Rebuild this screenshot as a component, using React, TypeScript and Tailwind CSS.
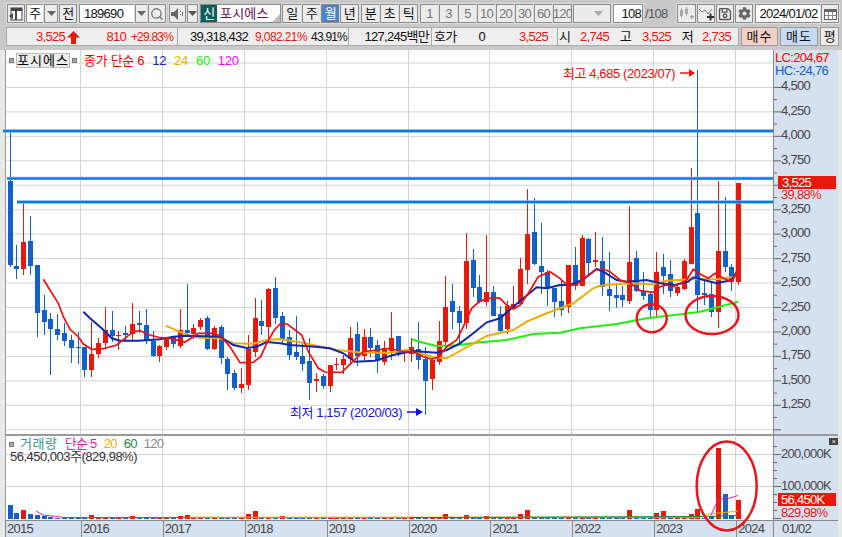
import type { ReactNode } from "react"
import { FaCog, FaRegSave } from "react-icons/fa"
import { Search } from "lucide-react"

// [up, high, low, bodyTop, bodyBottom] measured in 3x crop units (y = 170 + v / 3)
const candles: [number, number, number, number, number][] = [
  [0, -120, 290, 33, 285], [0, 225, 326, 288, 297], [1, 100, 315, 216, 297], [0, 138, 315, 213, 288],
  [0, 285, 500, 285, 429], [0, 375, 495, 420, 456], [0, 430, 615, 447, 477], [0, 432, 510, 477, 495],
  [0, 459, 528, 489, 513], [0, 495, 579, 510, 534], [0, 487, 582, 531, 534], [0, 530, 621, 531, 600],
  [1, 456, 621, 552, 600], [1, 504, 564, 519, 552], [1, 411, 534, 480, 519], [0, 423, 516, 480, 498],
  [1, 483, 540, 495, 498], [0, 468, 516, 489, 494], [1, 399, 516, 462, 492], [0, 423, 489, 459, 465],
  [0, 417, 522, 465, 513], [0, 483, 561, 513, 558], [1, 525, 576, 528, 558], [1, 501, 540, 501, 531],
  [0, 498, 534, 501, 522], [1, 417, 534, 480, 528], [0, 342, 498, 480, 489], [1, 462, 507, 474, 492],
  [1, 444, 480, 450, 471], [0, 438, 540, 444, 537], [1, 468, 540, 474, 537], [0, 465, 582, 471, 564],
  [0, 561, 660, 567, 612], [0, 600, 660, 609, 654], [1, 594, 669, 642, 654], [1, 495, 660, 537, 645],
  [1, 384, 561, 444, 546], [0, 390, 495, 453, 468], [1, 354, 510, 357, 471], [0, 321, 462, 354, 444],
  [0, 426, 520, 438, 507], [0, 480, 570, 501, 555], [0, 438, 570, 546, 561], [0, 522, 603, 558, 582],
  [0, 504, 690, 573, 639], [1, 609, 666, 628, 632], [0, 612, 657, 618, 648], [1, 585, 666, 585, 648],
  [1, 564, 600, 582, 586], [1, 555, 612, 567, 585], [1, 471, 585, 504, 567], [0, 456, 588, 492, 558],
  [1, 477, 570, 501, 558], [0, 474, 561, 501, 534], [0, 510, 609, 525, 573], [1, 513, 585, 534, 576],
  [1, 426, 570, 504, 543], [0, 498, 558, 498, 552], [1, 537, 576, 541, 545], [1, 504, 576, 531, 552],
  [0, 456, 597, 537, 570], [0, 531, 735, 567, 633], [1, 561, 660, 570, 627], [1, 453, 585, 513, 576],
  [1, 318, 528, 411, 516], [0, 342, 477, 393, 426], [0, 408, 525, 423, 459], [1, 189, 477, 273, 459],
  [0, 237, 381, 270, 354], [0, 315, 399, 351, 396], [1, 195, 408, 366, 396], [0, 348, 438, 366, 438],
  [0, 408, 489, 432, 483], [1, 393, 492, 408, 477], [1, 348, 420, 402, 417], [1, 264, 408, 297, 402],
  [1, 57, 342, 192, 300], [0, 84, 285, 186, 282], [0, 159, 372, 288, 306], [0, 300, 408, 306, 357],
  [0, 354, 441, 354, 396], [0, 330, 438, 393, 420], [1, 285, 429, 285, 411], [0, 231, 360, 285, 348],
  [1, 195, 348, 204, 348], [0, 204, 312, 207, 279], [1, 186, 290, 270, 275], [0, 201, 378, 273, 351],
  [0, 246, 423, 357, 378], [0, 345, 414, 375, 384], [0, 348, 411, 375, 390], [1, 108, 402, 276, 393],
  [0, 243, 366, 264, 363], [0, 306, 390, 363, 378], [0, 366, 444, 372, 420], [1, 246, 444, 306, 420],
  [0, 252, 372, 291, 318], [0, 270, 381, 312, 363], [1, 339, 378, 351, 369], [1, 267, 360, 273, 357],
  [1, -6, 282, 171, 282], [0, -300, 429, 129, 375], [0, 330, 405, 369, 375], [0, 339, 441, 372, 426],
  [1, 33, 474, 243, 426], [0, 81, 306, 243, 291], [0, 282, 363, 291, 336], [1, 39, 345, 39, 336],
]

const candleX = (i: number) => Math.round(9.5 + i * 6.81)
const priceY = (p: number) => 405.3 - ((p - 1250) / 250) * 24.45

// moving averages, same crop units; each crop has its own x offset
const line = (parts: [number, number[]][]) =>
  parts
    .flatMap(([off, pts]) => {
      const out: string[] = []
      for (let i = 0; i < pts.length; i += 2) {
        out.push(`${((pts[i] + off) / 3).toFixed(1)},${(170 + pts[i + 1] / 3).toFixed(1)}`)
      }
      return out
    })
    .join(" ")

const ma6 = line([
  [0, [130, 328, 150, 360, 175, 400, 190, 440, 210, 478, 235, 500, 250, 522, 275, 538, 310, 536, 350, 525, 375, 505, 400, 485, 420, 482, 450, 495, 480, 503, 510, 505, 555, 516, 575, 503, 595, 490, 640, 490, 660, 497, 690, 530, 720, 578, 760, 577, 782, 560, 800, 520, 823, 480]],
  [840, [0, 462, 22, 462, 65, 495, 85, 545, 115, 595, 135, 606, 185, 607, 215, 578, 250, 545, 290, 540, 330, 535, 370, 545, 400, 545, 430, 560, 455, 567, 475, 562, 500, 530, 530, 510, 550, 470, 575, 415, 600, 393, 640, 382, 660, 385, 680, 405, 700, 417, 720, 405, 745, 370, 775, 320, 810, 305]],
  [1680, [0, 325, 20, 345, 50, 345, 80, 320, 105, 300, 130, 297, 150, 305, 180, 330, 210, 338, 240, 362, 280, 367, 300, 350, 320, 345, 340, 350, 380, 330, 400, 298, 420, 312, 445, 325, 465, 310, 490, 325, 515, 335, 535, 300]],
])
const ma12 = line([
  [0, [250, 425, 270, 445, 305, 475, 335, 505, 360, 512, 415, 512, 480, 508, 520, 500, 560, 497, 660, 500, 700, 525, 740, 534, 770, 530, 800, 516]],
  [840, [0, 520, 30, 525, 105, 530, 150, 535, 190, 550, 225, 575, 285, 572, 340, 555, 400, 543, 470, 548, 500, 540, 540, 520, 580, 490, 620, 457, 660, 445, 700, 410, 730, 385, 770, 352, 800, 355]],
  [1680, [0, 345, 30, 345, 70, 328, 110, 297, 130, 305, 170, 330, 200, 335, 260, 330, 300, 340, 345, 345, 385, 335, 400, 322, 440, 332, 470, 340, 515, 330, 530, 305]],
])
const ma24 = line([
  [0, [497, 467, 530, 482, 570, 497, 600, 503, 660, 505, 700, 520, 760, 521, 800, 510]],
  [840, [0, 507, 50, 515, 100, 525, 170, 540, 250, 548, 330, 548, 380, 540, 420, 550, 460, 562, 500, 565, 545, 540, 590, 515, 620, 498, 700, 480, 740, 455, 800, 430]],
  [1680, [0, 415, 40, 400, 100, 355, 120, 347, 200, 340, 280, 343, 320, 332, 400, 328, 470, 328, 525, 320]],
])
const ma60 = line([
  [840, [395, 508, 430, 518, 470, 528, 530, 526, 600, 517, 680, 510, 760, 492]],
  [1680, [0, 488, 60, 475, 170, 462, 260, 445, 370, 432, 420, 425, 535, 395]],
])

const yearX = [80.5, 162.5, 244.5, 326.5, 408.5, 489.5, 571.5, 653.5, 735.5]
const years = ["2016", "2017", "2018", "2019", "2020", "2021", "2022", "2023"]
const priceLabels = [4500, 4250, 4000, 3750, 3500, 3250, 3000, 2750, 2500, 2250, 2000, 1750, 1500, 1250]

// volume bars whose height is more than the flat line at the bottom: index -> [height, red]
const bigVolume: Record<number, [number, number]> = {
  0: [14, 0], 1: [6, 0], 2: [9, 1], 3: [5, 0], 4: [4, 0], 5: [3, 0], 6: [2, 0], 12: [4, 1], 18: [3, 1],
  25: [3, 1], 26: [4, 1], 35: [5, 1], 36: [8, 1], 37: [2, 0], 40: [3, 1], 64: [5, 1], 67: [4, 1], 70: [3, 1],
  75: [5, 1], 76: [9, 1], 91: [9, 1], 95: [6, 1], 96: [8, 1], 100: [5, 1], 101: [10, 1], 103: [3, 0],
  104: [71, 1], 105: [25, 0], 106: [4, 0], 107: [19, 1],
}

const RED = "#e8190b"
const BLUE = "#1260cc"

function Btn({ className = "", children }: { className?: string; children?: ReactNode }) {
  return (
    <div className={`h-[19px] flex items-center justify-center bg-[#ececec] border border-[#8c8c8c] outline outline-1 outline-[#dcdcdc] ${className}`}>
      {children}
    </div>
  )
}

function Caret({ color = "#666" }: { color?: string }) {
  return (
    <svg width="9" height="5" viewBox="0 0 9 5">
      <polygon points="0,0 9,0 4.5,5" fill={color} />
    </svg>
  )
}

function Toolbar() {
  return (
    <div className="h-[27px] pl-[7px] pt-[4px] flex items-start text-[#111]">
      <Btn className="w-[18px]">
        <svg width="14" height="14" viewBox="0 0 14 14">
          <rect x="2" y="1" width="11" height="12" fill="#fff" stroke="#444" />
          <rect x="2" y="1" width="11" height="3" fill="#444" />
          <rect x="6" y="4" width="2" height="9" fill="#444" />
          <polygon points="0,9 4,6 4,12" fill="#444" />
        </svg>
      </Btn>
      <Btn className="w-[18px] ml-[1px] !bg-white">주</Btn>
      <Btn className="w-[14px]"><Caret /></Btn>
      <Btn className="w-[18px] ml-[1px]">전</Btn>
      <Btn className="w-[56px] ml-[2px] !bg-white !justify-start pl-[4px]">189690</Btn>
      <Btn className="w-[13px]"><Caret /></Btn>
      <Btn className="w-[18px]"><Search size={14} strokeWidth={2.2} color="#777" /></Btn>
      <Btn className="w-[17px] ml-[3px]">
        <svg width="14" height="12" viewBox="0 0 14 12">
          <polygon points="0,4 3,4 7,0 7,12 3,8 0,8" fill="#666" />
          <rect x="9" y="3" width="1" height="1" fill="#666" />
          <rect x="9" y="6" width="1" height="1" fill="#666" />
          <rect x="11" y="4" width="1" height="4" fill="#666" />
        </svg>
      </Btn>
      <Btn className="w-[11px] ml-[1px]"><Caret color="#555" /></Btn>
      <div className="relative h-[19px] w-[81px] ml-[2px] flex bg-white border border-[#8c8c8c]">
        <div className="w-[16px] bg-[#0b5f5b] text-white flex items-center justify-center">신</div>
        <div className="pl-[3px] text-[#6a0a4c] leading-[17px] tracking-[0.2px]">포시에스</div>
        <svg className="absolute right-0 bottom-0" width="8" height="8" viewBox="0 0 8 8">
          <polygon points="8,0 8,8 0,8" fill="#bbb" />
        </svg>
      </div>
      <div className="flex ml-[1px]">
        <Btn className="w-[20px]">일</Btn>
        <Btn className="w-[19px]">주</Btn>
        <Btn className="w-[19px] !bg-[#4f82c4] text-white">월</Btn>
        <Btn className="w-[19px]">년</Btn>
      </div>
      <div className="flex ml-[2px]">
        <Btn className="w-[19px]">분</Btn>
        <Btn className="w-[19px]">초</Btn>
        <Btn className="w-[19px]">틱</Btn>
      </div>
      <div className="flex ml-[2px] text-[#777]">
        {["1", "3", "5", "10", "20", "30", "60", "120"].map((n) => (
          <Btn key={n} className="w-[19px]">{n}</Btn>
        ))}
      </div>
      <Btn className="w-[38px] ml-[1px] !justify-end pr-[7px]"><Caret color="#aaa" /></Btn>
      <Btn className="w-[30px] ml-[2px] !bg-white !justify-end pr-[1px]">108</Btn>
      <div className="w-[34px] h-[19px] pl-[2px] text-[#555] leading-[19px]">/108</div>
      <Btn className="w-[19px]">
        <svg width="15" height="14" viewBox="0 0 15 14">
          <g fill="#aaa">
            <rect x="1" y="3" width="3" height="6" />
            <rect x="2" y="1" width="1" height="10" />
            <rect x="6" y="2" width="3" height="5" />
            <rect x="7" y="0" width="1" height="9" />
            <rect x="11" y="9" width="4" height="1.5" />
            <rect x="12" y="8" width="1.5" height="4" />
          </g>
        </svg>
      </Btn>
      <Btn className="w-[18px] ml-[1px]">
        <svg width="15" height="14" viewBox="0 0 15 14">
          <polyline points="0,2 3,5 6,3 9,7 13,2" fill="none" stroke="#777" />
          <rect x="8" y="9" width="7" height="2" fill="#333" />
          <rect x="10.5" y="6.5" width="2" height="7" fill="#333" />
        </svg>
      </Btn>
      <Btn className="w-[18px] ml-[1px]"><FaRegSave size={14} color="#555" /></Btn>
      <Btn className="w-[18px] ml-[1px]"><FaCog size={13} color="#666" /></Btn>
      <Btn className="w-[66px] ml-[2px] !bg-white pl-[1px]">2024/01/02</Btn>
      <Btn className="w-[18px]">
        <svg width="13" height="12" viewBox="0 0 13 12">
          <rect x="0.5" y="1.5" width="12" height="10" fill="#fff" stroke="#666" />
          <rect x="0.5" y="1" width="12" height="3" fill="#666" />
          <path d="M4.5 4v7M8.5 4v7M1 7.5h11" stroke="#888" />
        </svg>
      </Btn>
    </div>
  )
}

function Quote() {
  return (
    <div className="h-[19px] pl-[6px] flex items-stretch leading-[18px] text-[#111]">
      <div className="w-[172px] flex bg-[#eeeeee] border border-[#aaa] text-[#e8190b]">
        <span className="w-[58px] text-right">3,525</span>
        <svg className="ml-[2px] mt-[3px]" width="13" height="13" viewBox="0 0 13 13">
          <polygon points="6.5,0 13,6.5 9,6.5 9,13 4,13 4,6.5 0,6.5" fill={RED} />
        </svg>
        <span className="w-[46px] text-right">810</span>
        <span className="w-[47px] text-right text-[12px] tracking-[-0.8px]">+29.83%</span>
      </div>
      <div className="w-[171px] flex bg-[#eeeeee] border-y border-r border-[#aaa]">
        <span className="w-[70px] text-right">39,318,432</span>
        <span className="w-[59px] text-right text-[#e8190b] text-[12px] tracking-[-0.6px]">9,082.21%</span>
        <span className="w-[40px] text-right text-[12px] tracking-[-0.8px]">43.91%</span>
      </div>
      <div className="w-[83px] bg-[#eeeeee] border-y border-r border-[#aaa] text-right pr-[2px]">127,245백만</div>
      <div className="w-[126px] flex bg-[#eeeeee] border-y border-r border-[#aaa]">
        <span className="w-[25px] pl-[2px]">호가</span>
        <span className="w-[28px] text-right">0</span>
        <span className="w-[63px] text-right text-[#e8190b]">3,525</span>
      </div>
      <div className="w-[181px] flex bg-[#eeeeee] border-y border-r border-[#aaa]">
        <span className="w-[12px] pl-[1px]">시</span>
        <span className="w-[39px] text-right text-[#e8190b]">2,745</span>
        <span className="w-[22px] text-right">고</span>
        <span className="w-[40px] text-right text-[#e8190b]">3,525</span>
        <span className="w-[22px] text-right">저</span>
        <span className="w-[38px] text-right text-[#e8190b]">2,735</span>
      </div>
      <div className="w-[37px] ml-[2px] bg-[#f3d0c8] border border-[#999] text-center tracking-[1px]">매수</div>
      <div className="w-[38px] ml-[2px] bg-[#c5dcf2] border border-[#999] text-center tracking-[1px]">매도</div>
      <div className="w-[19px] ml-[2px] bg-[#ececec] border border-[#999] text-center">평</div>
    </div>
  )
}

function PricePane() {
  return (
    <div className="relative h-[384px] flex">
      <div className="relative flex-1 bg-white border-l border-[#999]">
        <svg className="absolute left-0 top-0 overflow-visible" width="768" height="384" viewBox="6 50 768 384">
          {[4750, ...priceLabels, 1000].map((p) => (
            <line key={p} x1="6" x2="773" y1={priceY(p)} y2={priceY(p)} stroke="#d2d2d2" />
          ))}
          {yearX.map((x) => (
            <line key={x} x1={x} x2={x} y1="50" y2="434" stroke="#d2d2d2" />
          ))}
          {candles.map(([up, hi, lo, top, bottom], i) => {
            const x = candleX(i)
            const c = up ? RED : BLUE
            return (
              <g key={i} fill={c} shapeRendering="crispEdges">
                <rect x={x} y={170 + hi / 3} width="1" height={(lo - hi) / 3} />
                <rect x={x - 2} y={170 + top / 3} width="5" height={Math.max((bottom - top) / 3, 1)} />
              </g>
            )
          })}
          <polyline points={ma60} fill="none" stroke="#22ee11" strokeWidth="2" />
          <polyline points={ma24} fill="none" stroke="#f0ac00" strokeWidth="2" />
          <polyline points={ma12} fill="none" stroke="#0f2aa8" strokeWidth="2" />
          <polyline points={ma6} fill="none" stroke="#f50d0d" strokeWidth="1.7" />
          <g stroke="#6db4f6" strokeWidth="3.4">
            <line x1="3" x2="775" y1="131" y2="131" />
            <line x1="7" x2="775" y1="178.4" y2="178.4" />
            <line x1="17" x2="775" y1="202" y2="202" />
          </g>
          <g stroke="#0a79e6" strokeWidth="2">
            <line x1="3" x2="775" y1="131" y2="131" />
            <line x1="7" x2="775" y1="178.4" y2="178.4" />
            <line x1="17" x2="775" y1="202" y2="202" />
          </g>
          <ellipse cx="651.7" cy="318.3" rx="15" ry="14" fill="none" stroke="#f0141a" strokeWidth="2.5" />
          <ellipse cx="712" cy="315" rx="26.5" ry="19" fill="none" stroke="#f0141a" strokeWidth="2.5" />
          <g fill="none" strokeWidth="1.5">
            <line x1="680" x2="692" y1="73" y2="73" stroke={RED} />
            <line x1="407" x2="418" y1="412" y2="412" stroke="#1414e0" />
          </g>
          <polygon points="689,69 695,73 689,77" fill={RED} />
          <polygon points="416,408 423,412 416,416" fill="#1414e0" />
        </svg>
        <div className="absolute left-[3px] top-[3px] h-[15px] flex items-center">
          <div className="w-[5px] h-[5px] bg-[#aaa] border border-[#777]" />
          <div className="ml-[2px] w-[54px] h-[15px] bg-[#ececec] border border-[#bbb] text-center leading-[13px] tracking-[1px]">포시에스</div>
          <div className="ml-[2px] w-[5px] h-[5px] bg-[#aaa] border border-[#777]" />
          <div className="ml-[7px] flex gap-[8px] tracking-[-0.3px]">
            <span className="text-[#f00]">종가 단순 6</span>
            <span className="text-[#0f2aa8]">12</span>
            <span className="text-[#f0ac00]">24</span>
            <span className="text-[#22ee11]">60</span>
            <span className="text-[#f0f]">120</span>
          </div>
        </div>
        <div className="absolute left-[557px] top-[15px] text-[#f00] tracking-[-0.4px]">최고 4,685 (2023/07)</div>
        <div className="absolute left-[284px] top-[354px] text-[#1414e0] tracking-[-0.4px]">최저 1,157 (2020/03)</div>
      </div>
      <PriceAxis />
    </div>
  )
}

function PriceAxis() {
  return (
    <div className="relative w-[65px] bg-[#d5e1ef] border-l border-[#888] text-[#444]">
      <svg className="absolute left-0 top-0" width="8" height="384" viewBox="774 50 8 384">
        {[...priceLabels, 1000].map((p) => (
          <g key={p} stroke="#666">
            <line x1="774" x2="781" y1={priceY(p)} y2={priceY(p)} />
            <line x1="774" x2="777" y1={priceY(p) + 12.2} y2={priceY(p) + 12.2} />
          </g>
        ))}
      </svg>
      <div className="absolute left-[1px] top-[1px] leading-[13px] text-[#f00] bg-[#d5e1ef]">LC:204,67</div>
      <div className="absolute left-[1px] top-[14px] leading-[13px] text-[#1260cc] bg-[#d5e1ef]">HC:-24,76</div>
      {priceLabels.map((p) =>
        p === 3500 ? null : (
          <div key={p} className="absolute left-[7px] leading-[14px]" style={{ top: priceY(p) - 58 }}>
            {p.toLocaleString("en-US")}
          </div>
        ),
      )}
      <div className="absolute left-[4px] top-[126px] w-[58px] h-[13px] pl-[4px] bg-[#e8190b] text-white leading-[13px]">3,525</div>
      <div className="absolute left-[7px] top-[139px] leading-[11px] text-[#e8190b]">39,88%</div>
    </div>
  )
}

function VolumePane() {
  const bars = candles.map(([up], i) => {
    const big = bigVolume[i]
    return { x: candleX(i), h: big ? big[0] : 1, red: big ? big[1] : up }
  })
  return (
    <div className="relative z-10 h-[86px] flex">
      <div className="relative flex-1 bg-white border-l border-[#999] border-t-2 border-t-[#999]">
        <svg className="absolute left-0 -top-[2px] overflow-visible" width="768" height="86" viewBox="6 434 768 86">
          {[454.5, 486.5].map((y) => (
            <line key={y} x1="6" x2="773" y1={y} y2={y} stroke="#d2d2d2" />
          ))}
          {yearX.map((x) => (
            <line key={x} x1={x} x2={x} y1="435" y2="519" stroke="#d2d2d2" />
          ))}
          {bars.map((b, i) => (
            <rect key={i} x={b.x - 2} y={519 - b.h} width="5" height={b.h} fill={b.red ? RED : BLUE} shapeRendering="crispEdges" />
          ))}
          <polyline points="36,511 43,515 57,516.5 64,517.5 400,517.5 700,517.5" fill="none" stroke="#e020b0" strokeWidth="1" />
          <polyline points="190,517.2 700,517.2 710,514 738,511" fill="none" stroke="#f0ac00" strokeWidth="1" />
          <polyline points="410,517.6 700,516.5 738,515.5" fill="none" stroke="#168a3c" strokeWidth="1" />
          <polyline points="711,515 717,502 723,498 730,498 738,495.5" fill="none" stroke="#e020b0" strokeWidth="1" />
          <ellipse cx="726.7" cy="486" rx="30" ry="44.5" fill="none" stroke="#f0141a" strokeWidth="2.5" />
        </svg>
        <div className="absolute left-[3px] top-[1px] flex items-center h-[14px] leading-[14px] gap-[7px]">
          <div className="w-[5px] h-[5px] bg-[#aaa] border border-[#777] mr-[-1px]" />
          <span className="text-[#2a9a94] tracking-[0.6px]">거래량</span>
          <span className="text-[#e020b0]">단순 5</span>
          <span className="text-[#f0ac00]">20</span>
          <span className="text-[#168a3c]">60</span>
          <span className="text-[#888]">120</span>
        </div>
        <div className="absolute left-[4px] top-[15px] leading-[12px] text-[#333] tracking-[-0.5px]">56,450,003주(829,98%)</div>
      </div>
      <div className="relative w-[65px] bg-[#d5e1ef] border-l border-[#888] border-t-2 border-t-[#999] text-[#444]">
        <svg className="absolute left-0 top-0" width="8" height="84" viewBox="774 436 8 84">
          {[454.5, 486.5, 518.5].map((y) => (
            <g key={y} stroke="#666">
              <line x1="774" x2="781" y1={y} y2={y} />
              <line x1="774" x2="777" y1={y + 8} y2={y + 8} />
              <line x1="774" x2="777" y1={y + 16} y2={y + 16} />
              <line x1="774" x2="777" y1={y + 24} y2={y + 24} />
              <line x1="774" x2="777" y1={y - 8} y2={y - 8} />
            </g>
          ))}
        </svg>
        <div className="absolute left-[55px] top-[2px] w-[9px] h-[7px] bg-[#444] text-white text-[7px] leading-[7px] text-center">×</div>
        <div className="absolute left-[7px] top-[11px] leading-[14px]">200,000K</div>
        <div className="absolute left-[7px] top-[43px] leading-[14px]">100,000K</div>
        <div className="absolute left-[4px] top-[57px] w-[58px] h-[13px] pl-[3px] bg-[#e8190b] text-white leading-[13px]">56,450K</div>
        <div className="absolute left-[4px] top-[70px] pl-[3px] leading-[13px] text-[#e8190b]">829,98%</div>
      </div>
    </div>
  )
}

function DateAxis() {
  return (
    <div className="h-[17px] flex bg-[#d5e1ef] border-t border-[#888] border-l text-[#444] leading-[15px]">
      <div className="w-[75px] pl-[1px]">2015</div>
      {years.map((y) => (
        <div key={y} className="w-[82px] pl-[1px] border-l border-[#888]">{y}</div>
      ))}
      <div className="w-[37px] pl-[1px] border-l border-[#888]">2024</div>
      <div className="w-[65px] pl-[8px] border-l border-[#888]">01/02</div>
    </div>
  )
}

export default function App() {
  return (
    <div className="w-[842px] h-[537px] overflow-hidden bg-[#c9c9c9] text-[13px] tracking-[-0.7px] leading-[17px] font-['Liberation_Sans','Noto_Sans_CJK_KR',sans-serif]">
      <Toolbar />
      <Quote />
      <div className="mt-[4px] pl-[5px] pr-[4px] h-[487px] bg-[#e8e8e8]">
        <PricePane />
        <VolumePane />
        <DateAxis />
      </div>
    </div>
  )
}
